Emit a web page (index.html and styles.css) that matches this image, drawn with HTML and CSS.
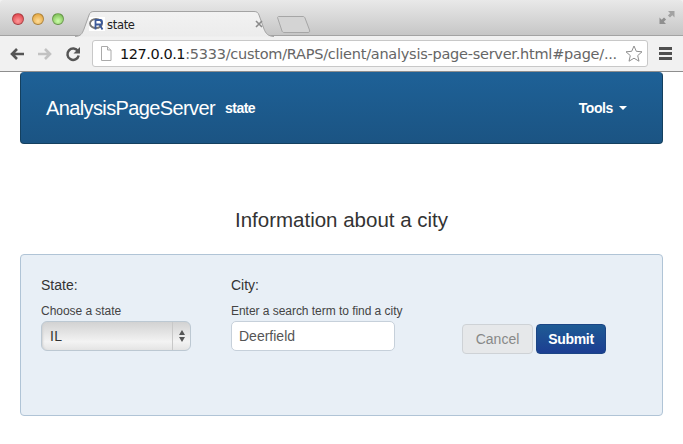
FILE: index.html
```html
<!DOCTYPE html>
<html lang="en">
<head>
<meta charset="utf-8">
<title>state</title>
<link rel="stylesheet" href="styles.css">
</head>
<body>
<header class="chrome">
  <div class="titlebar">
    <div class="lights">
      <span class="light red"></span>
      <span class="light amber"></span>
      <span class="light green"></span>
    </div>
    <div class="tab">
      <svg class="tab-shape" width="204" height="26" viewBox="0 0 204 26" aria-hidden="true">
        <path d="M0 25.5C6 25 7 23 9 18L14 4C15 1.500 16 .5 19 .5H179C182 .5 183 1.500 184 4L189 18C191 23 193 25 199 25.500" fill="url(#tabfill)" stroke="#a3a3a3"/>
        <defs><linearGradient id="tabfill" x1="0" y1="0" x2="0" y2="1"><stop offset="0" stop-color="#f2f2f2"/><stop offset="1" stop-color="#ececec"/></linearGradient></defs>
      </svg>
      <svg class="favicon" width="16" height="14" viewBox="0 0 16 14" aria-hidden="true">
        <rect width="16" height="14" fill="#fff"/>
        <ellipse cx="7" cy="6.500" rx="6" ry="4.500" fill="none" stroke="#777" stroke-width="1.800"/>
        <path d="M6.500 12.500V3H11.500C13.500 3 13.500 7.500 11.500 7.500H6.500M10.500 7.500L13.500 12.500" fill="none" stroke="#3c5a9a" stroke-width="1.800"/>
      </svg>
      <span class="tab-title">state</span>
      <svg class="tab-close" width="8" height="8" viewBox="0 0 8 8" aria-hidden="true"><path d="M1 1L7 7M7 1L1 7" stroke="#8a8a8a" stroke-width="1.600"/></svg>
    </div>
    <svg class="newtab" width="34" height="17" viewBox="0 0 34 17" aria-hidden="true">
      <path d="M.5 1.500C.5 1 1 .5 2 .5H26C27 .5 27.500 1 28 2L32.500 14C33 15.500 32.500 16.500 31 16.500H7C6 16.500 5.500 16 5 15Z" fill="#d4d4d4" stroke="#a6a6a6"/>
    </svg>
    <svg class="fullscreen" width="16" height="15" viewBox="0 0 16 15" aria-hidden="true">
      <path d="M9 1H15.500V7.500L13.300 5.300L11 7.600L8.900 5.500L11.200 3.200Z" fill="#a2a2a2"/>
      <path d="M7 14H.5V7.500L2.700 9.700L5 7.400L7.100 9.500L4.800 11.800Z" fill="#8f8f8f"/>
    </svg>
  </div>
  <div class="toolbar">
    <svg class="nav-icon" width="16" height="14" viewBox="0 0 16 14" aria-hidden="true"><path d="M15 7H3M8 2L3 7L8 12" fill="none" stroke="#555" stroke-width="2.600"/></svg>
    <svg class="nav-icon" width="16" height="14" viewBox="0 0 16 14" aria-hidden="true"><path d="M1 7H13M8 2L13 7L8 12" fill="none" stroke="#c2c2c2" stroke-width="2.600"/></svg>
    <svg class="nav-icon" width="16" height="16" viewBox="0 0 16 16" aria-hidden="true"><path d="M13 5.200A5.700 5.700 0 1 0 13.700 9.500" fill="none" stroke="#555" stroke-width="2.500"/><path d="M15 1V7.500H8.500Z" fill="#555"/></svg>
    <div class="omnibox">
      <svg class="page-icon" width="12" height="15" viewBox="0 0 12 15" aria-hidden="true"><path d="M1.500 .5H7.500L11 4V14.500H1.500Z" fill="#fff" stroke="#aaa"/><path d="M7.500 .5V4H11" fill="#eee" stroke="#aaa"/></svg>
      <span class="url"><span class="host">127.0.0.1</span>:5333/custom/RAPS/client/analysis-page-server.html#page/...</span>
      <svg class="star" width="18" height="17" viewBox="0 0 18 17" aria-hidden="true"><path d="M9 1L11.300 6.300L17 6.800L12.700 10.600L14 16.200L9 13.200L4 16.200L5.300 10.600L1 6.800L6.700 6.300Z" fill="#fff" stroke="#8f8f8f"/></svg>
    </div>
    <div class="menu-icon"><span></span><span></span><span></span></div>
  </div>
</header>
<main class="page">
  <nav class="navbar">
    <span class="brand">AnalysisPageServer</span>
    <span class="subtitle">state</span>
    <span class="tools">Tools<span class="caret"></span></span>
  </nav>
  <h1 class="heading">Information about a city</h1>
  <form class="well">
    <div class="field field-state">
      <div class="field-label">State:</div>
      <div class="field-help">Choose a state</div>
      <div class="select">
        <span class="select-value">IL</span>
        <span class="select-arrows"><span class="arrow-up"></span><span class="arrow-down"></span></span>
      </div>
    </div>
    <div class="field field-city">
      <div class="field-label">City:</div>
      <div class="field-help">Enter a search term to find a city</div>
      <div class="input">Deerfield</div>
    </div>
    <div class="actions">
      <span class="btn btn-cancel">Cancel</span>
      <span class="btn btn-submit">Submit</span>
    </div>
  </form>
</main>
</body>
</html>
```

FILE: styles.css
```css
* { box-sizing: border-box; }
html, body { margin: 0; height: 100%; }
body {
  width: 683px;
  height: 444px;
  overflow: hidden;
  background: #fff;
  font-family: "Liberation Sans", Arial, sans-serif;
  color: #333;
}
.chrome {
  height: 72px;
  background: #f1f1f1;
  border-bottom: 1px solid #8e8e8e;
}
.titlebar {
  height: 36px;
  display: flex;
  align-items: flex-start;
  background: linear-gradient(#e9e9e9, #c6c6c6);
  border-bottom: 1px solid #a3a3a3;
  border-radius: 4px 4px 0 0;
}
.lights {
  display: flex;
  gap: 8px;
  padding: 13px 0 0 12px;
}
.light {
  width: 12px;
  height: 12px;
  border-radius: 50%;
  border: 1px solid rgba(0, 0, 0, .25);
}
.red { background: radial-gradient(circle at 50% 70%, #f99, #d8333c); }
.amber { background: radial-gradient(circle at 50% 70%, #fd9, #dd9a2c); }
.green { background: radial-gradient(circle at 50% 70%, #cfa, #6cb044); }
.tab {
  position: relative;
  width: 204px;
  height: 26px;
  margin: 11px 0 0 11px;
  display: flex;
  align-items: center;
  padding-left: 14px;
}
.tab-shape { position: absolute; left: 0; top: 0; }
.favicon { position: relative; margin: 0 2px 0 0; }
.tab-title {
  position: relative;
  font: 11.500px "Lucida Grande", "DejaVu Sans", sans-serif;
  color: #222;
  letter-spacing: -.3px;
  padding-top: 1px;
}
.tab-close { position: absolute; left: 180px; top: 9px; }
.newtab { margin: 16px 0 0 -2px; }
.fullscreen { margin: 10px 0 0 auto; margin-right: 8px; }
.toolbar {
  height: 35px;
  display: flex;
  align-items: center;
  padding: 0 0 0 9px;
  background: #f1f1f1;
}
.nav-icon { margin-right: 12px; flex: none; }
.omnibox {
  width: 556px;
  height: 27px;
  margin-left: -1px;
  display: flex;
  align-items: center;
  padding: 0 4px 0 7px;
  background: #fff;
  border: 1px solid #c8c8c8;
  border-radius: 3px;
}
.page-icon { flex: none; margin-right: 8px; }
.url {
  flex: 1;
  min-width: 0;
  white-space: nowrap;
  font: 14.500px "DejaVu Sans", sans-serif;
  letter-spacing: -.25px;
  color: #666;
}
.host { color: #111; letter-spacing: -.45px; }
.star { flex: none; }
.menu-icon {
  display: flex;
  flex-direction: column;
  gap: 2px;
  margin-left: 11px;
}
.menu-icon span {
  width: 13px;
  height: 3px;
  background: #4f4f4f;
}
.page { padding: 0 20px; }
.navbar {
  height: 72px;
  display: flex;
  align-items: center;
  padding: 0 35px 0 25px;
  color: #fff;
  background: linear-gradient(#1e6197, #1b5483);
  border: 1px solid #14405f;
  border-top-color: #1e6197;
  border-radius: 4px;
}
.brand {
  font-size: 20px;
  letter-spacing: -.62px;
  margin-right: 10px;
}
.subtitle {
  font-size: 14px;
  font-weight: bold;
  letter-spacing: -.5px;
}
.tools {
  margin-left: auto;
  font-size: 14px;
  font-weight: bold;
  letter-spacing: -.4px;
  display: flex;
  align-items: center;
}
.caret {
  width: 0;
  height: 0;
  margin-left: 6px;
  border-left: 4px solid transparent;
  border-right: 4px solid transparent;
  border-top: 4px solid #fff;
}
.heading {
  margin: 0;
  padding-top: 62px;
  height: 110px;
  text-align: center;
  font-size: 20.500px;
  line-height: 28px;
  font-weight: normal;
  color: #333;
}
.well {
  height: 162px;
  display: flex;
  align-items: flex-start;
  padding: 21px 20px;
  background: #e8eff6;
  border: 1px solid #b0c4d6;
  border-radius: 4px;
}
.field { flex: none; }
.field-state { width: 190px; }
.field-city { width: 231px; }
.field-label {
  font-size: 14px;
  line-height: 18px;
}
.field-help {
  margin-top: 9px;
  font-size: 12px;
  line-height: 16px;
  letter-spacing: -.04px;
  color: #444;
}
.select {
  width: 150px;
  height: 30px;
  margin-top: 2px;
  display: flex;
  align-items: center;
  background: linear-gradient(#d2d2d2, #f3f3f3 70%, #e4e4e4);
  border: 1px solid #bcc8d2;
  border-radius: 6px;
  box-shadow: inset 2px 0 2px -1px #d0d0d0;
}
.select-value {
  flex: 1;
  padding-left: 8px;
  font-size: 14px;
  letter-spacing: .3px;
}
.select-arrows {
  width: 18px;
  height: 100%;
  display: flex;
  flex-direction: column;
  align-items: center;
  justify-content: center;
  gap: 2px;
  border-left: 1px solid #c8c8c8;
}
.arrow-up, .arrow-down {
  width: 0;
  height: 0;
  border-left: 3px solid transparent;
  border-right: 3px solid transparent;
}
.arrow-up { border-bottom: 5px solid #555; }
.arrow-down { border-top: 5px solid #555; }
.input {
  width: 164px;
  height: 30px;
  margin-top: 2px;
  padding-left: 7px;
  font-size: 14px;
  line-height: 28px;
  color: #555;
  background: #fff;
  border: 1px solid #c6d0da;
  border-radius: 5px;
}
.actions {
  display: flex;
  gap: 3px;
  margin-top: 48px;
}
.btn {
  width: 71px;
  height: 30px;
  text-align: center;
  font-size: 14px;
  line-height: 28px;
  border-radius: 4px;
}
.btn-cancel {
  color: #888;
  background: #e6e8ea;
  border: 1px solid #ced2d6;
}
.btn-submit {
  width: 70px;
  color: #fff;
  font-weight: bold;
  letter-spacing: -.3px;
  background: linear-gradient(#1e5b94, #1c3e92);
  border: 1px solid #1b4585;
}
```
